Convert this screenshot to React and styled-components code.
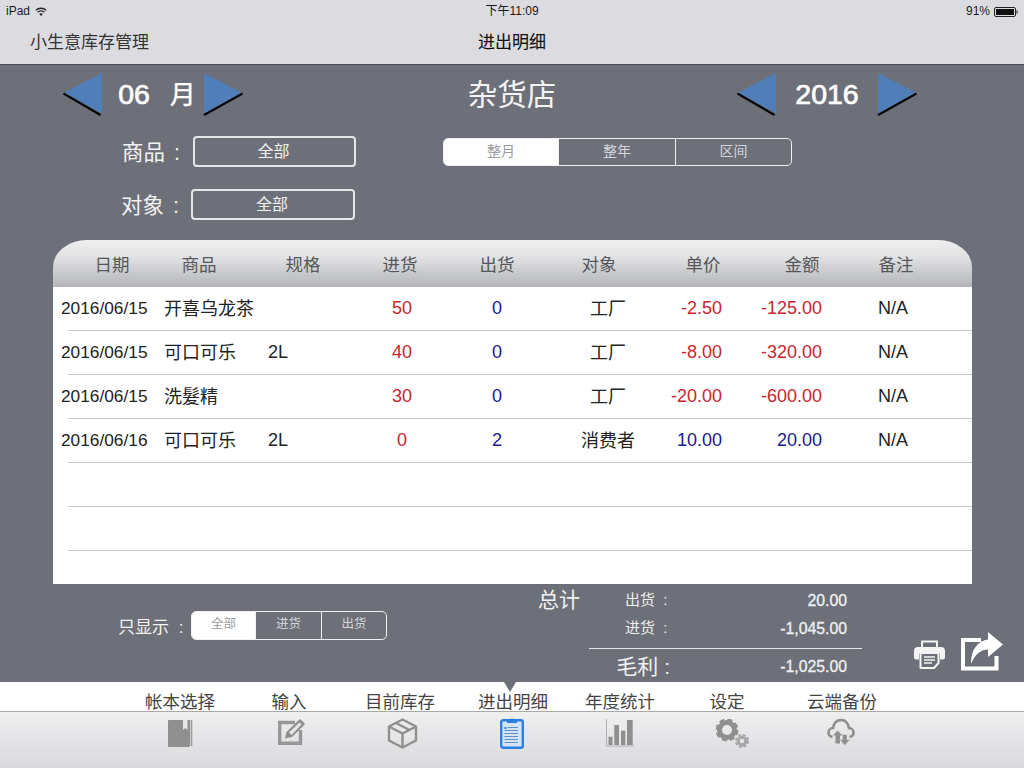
import React from "react";
import styled, { createGlobalStyle } from "styled-components";

const Global = createGlobalStyle`
  html, body { margin: 0; padding: 0; background: #6d7078; }
  * { box-sizing: border-box; }
  body { font-family: "Liberation Sans", "Noto Sans CJK SC", sans-serif; }
`;
const Page = styled.div`
  width: 1024px; height: 768px; overflow: hidden; display: flex; flex-direction: column; background: #6d7078;
`;
const Header = styled.header`
  height: 65px; background: #dcdce0; border-bottom: 1px solid #4b4d52; flex: none; color: #111;
`;
const StatusBar = styled.div`
  height: 23px; padding: 0 6px; display: grid; grid-template-columns: 1fr auto 1fr; align-items: center; font-size: 12px; line-height: 23px; color: #1a1a1a;
`;
const StatusLeft = styled.div`display: flex; align-items: center; gap: 5px;`;
const StatusRight = styled.div`display: flex; align-items: center; justify-content: flex-end; gap: 4px;`;
const NavBar = styled.div`
  height: 41px; padding: 0 0 0 30px; display: grid; grid-template-columns: 448px 68px; align-items: start; font-size: 17px; line-height: 40px;
`;
const AppName = styled.div`color: #333; white-space: nowrap;`;
const NavTitle = styled.div`color: #111; white-space: nowrap; -webkit-text-stroke: .1px #111;`;

const Main = styled.main`flex: none; height: 617px; display: flex; flex-direction: column;`;
const TopRow = styled.div`
  height: 71px; flex: none; padding: 8px 0 0 63px; display: grid; grid-template-columns: 180px 494px 180px; align-items: start; color: #fff;
`;
const Stepper = styled.div`display: flex; align-items: flex-start; justify-content: space-between;`;
const StepValue = styled.div`
  font-size: 28.5px; font-weight: 400; line-height: 42px; white-space: nowrap; -webkit-text-stroke: .7px #fff;
  margin-left: ${p => p.$shift || 0}px;
`;
const MonthUnit = styled.span`margin-left: 20px; font-size: 26px; -webkit-text-stroke: .4px #fff;`;
const StoreTitle = styled.div`font-size: 29.5px; line-height: 44px; text-align: center; padding-left: 44px; color: #f4f4f4;`;

const Filters = styled.div`
  height: 104px; flex: none; display: grid; grid-template-columns: 443px 349px; grid-template-rows: 31px 31px; row-gap: 22px;
`;
const FilterLine = styled.div`
  display: flex; align-items: center; padding-left: ${p => p.$left}px; color: #f2f2f2; font-size: 21.5px; white-space: nowrap;
`;
const FilterLabel = styled.span`width: ${p => p.$width}px; word-spacing: 3px; padding-bottom: 2px;`;
const Field = styled.div`
  width: ${p => p.$width}px; height: 31px; border: 2px solid #e6e6e8; border-radius: 4px; text-align: center; font-size: 16px; line-height: 28px; color: #f2f2f2; padding-right: 2px;
`;
const Segmented = styled.div`
  display: grid; grid-template-columns: ${p => p.$cols}; height: ${p => p.$height}px; border: 1px solid #f0f0f0; border-radius: 5px; overflow: hidden; align-self: center;
  width: ${p => p.$width}px;
`;
const Segment = styled.div`
  text-align: center; font-size: ${p => p.$size}px; line-height: ${p => p.$height - 3}px; color: ${p => (p.$on ? "#9a9a9a" : "#d4d5d8")};
  background: ${p => (p.$on ? "#fff" : "transparent")};
  border-left: ${p => (p.$first ? "0" : "1px solid #f0f0f0")};
`;

const Table = styled.section`
  margin-left: 53px; width: 919px; height: 344px; flex: none; display: flex; flex-direction: column;
`;
const TableHead = styled.div`
  height: 47px; flex: none; border-radius: 34px 34px 0 0 / 27px 27px 0 0; padding-left: 15px; display: grid; background: linear-gradient(#efeff0 0%, #e2e2e4 35%, #b3b5b8 100%);
  grid-template-columns: 88px 86px 122px 72px 122px 82px 126px 72px 116px; align-items: center; text-align: center; font-size: 17.5px; color: #55575b;
`;
const TableBody = styled.div`flex: 1; background: #fff;`;
const TableRow = styled.div`
  height: 44px; padding-left: 8px; display: grid; grid-template-columns: 103px 104px 89px 90px 100px 122px 53px 100px 1fr; align-items: center; font-size: 18px; color: #222;
  padding-bottom: 2px;
  background: linear-gradient(#c9c9cb, #c9c9cb) no-repeat 15px 100% / calc(100% - 15px) 1px;
`;
const Cell = styled.div`
  text-align: ${p => p.$align || "left"}; color: ${p => p.$color || "inherit"}; font-size: ${p => p.$size || 18}px; white-space: nowrap;
  padding-left: ${p => p.$pad || 0}px; padding-bottom: ${p => p.$lift || 0}px;
`;

const Footer = styled.div`
  height: 98px; flex: none; display: grid; grid-template-columns: 420px 324px 1fr; padding-left: 118px;
`;
const ShowFilter = styled.div`
  display: flex; align-items: center; height: 29px; margin-top: 27px; color: #f2f2f2; font-size: 17px; white-space: nowrap;
`;
const ShowLabel = styled.span`width: 73px; word-spacing: 5px;`;
const Summary = styled.div`
  display: grid; grid-template-columns: 87px 45px 177px 15px; grid-template-rows: 28px 28px 6px 1px 33px; padding-top: 2px; color: #f0f0f2; align-items: center;
`;
const TotalTitle = styled.div`font-size: 21px; color: #f2f2f2; margin-top: -4px;`;
const SumLabel = styled.div`font-size: 15px; white-space: nowrap; color: #eee; word-spacing: 4px; padding-bottom: 4px;`;
const SumValue = styled.div`font-size: 15.8px; text-align: right; padding-top: 2px; -webkit-text-stroke: .3px #f0f0f2;`;
const SumRule = styled.div`grid-column: 1 / -1; grid-row: 4; height: 1px; margin-left: 51px; background: #e6e6e8;`;
const ProfitLabel = styled.div`grid-column: 1 / 3; grid-row: 5; text-align: right; font-size: 21px; white-space: nowrap; color: #f2f2f2; padding-bottom: 2px;`;
const ProfitValue = styled(SumValue)`grid-column: 3; grid-row: 5;`;
const Actions = styled.div`display: flex; align-items: flex-start; padding: 48px 0 0 52px; gap: 16px;`;
const PrinterSlot = styled.div`margin-top: 8px;`;

const LabelBand = styled.div`
  height: 29px; flex: none; background: #fff; padding: 12px 0 0 125px; position: relative;
  display: grid; grid-template-columns: 110px 108px 114px 112px 102px 112px 118px; text-align: center; font-size: 17.5px; line-height: 17px; color: #444;
  white-space: nowrap;
`;
const Pointer = styled.div`
  position: absolute; top: 0; left: 504px; width: 0; height: 0;
  border-left: 6px solid transparent; border-right: 6px solid transparent; border-top: 10px solid #6d7078;
`;
const TabBar = styled.nav`
  flex: 1; border-top: 1px solid #a9a9ab; background: linear-gradient(#efeff0, #d9d9dd); padding: 4px 0 0 126px;
  display: grid; grid-template-columns: 110px 110px 112px 108px 108px 114px 106px; justify-items: center; align-items: start;
`;
const TabIcon = styled.div`
  display: flex; margin-top: ${p => p.$top}px; margin-left: ${p => p.$left || 0}px;
`;

const Arrow = ({ dir }) => (
  <svg width="40" height="43" viewBox="0 0 40 43">
    {dir === "left" ? (
      <>
        <path d="M.5 20.500 L37.500 42" stroke="#050608" strokeWidth="2.400" fill="none" />
        <path d="M1.500 19.500 L39 0 L39 40.500 Z" fill="#4f7eb8" />
      </>
    ) : (
      <>
        <path d="M39.500 20.500 L1 42" stroke="#050608" strokeWidth="2.400" fill="none" />
        <path d="M1 0 L38.500 19.500 L1 40.500 Z" fill="#4f7eb8" />
      </>
    )}
  </svg>
);

const Wifi = () => (
  <svg width="12" height="10" viewBox="0 0 12 10" fill="none" stroke="#222" strokeWidth="1.3">
    <path d="M.8 3.4a7.4 7.4 0 0 1 10.4 0M2.6 5.3a4.8 4.8 0 0 1 6.8 0" />
    <path d="M4.2 7.1a2.5 2.5 0 0 1 3.6 0L6 9z" fill="#222" stroke="none" />
  </svg>
);
const Battery = () => (
  <svg width="24" height="10" viewBox="0 0 24 10">
    <rect x=".5" y=".5" width="21" height="9" rx="1.5" fill="none" stroke="#222" />
    <rect x="2" y="2" width="18" height="6" fill="#111" />
    <path d="M22.500 3.200h1v3.600h-1z" fill="#222" />
  </svg>
);
const Printer = () => (
  <svg width="31" height="29" viewBox="0 0 31 29">
    <path d="M8 8V1.500h15V8" fill="none" stroke="#f4f4f4" strokeWidth="2" />
    <path d="M4 7h23a4 4 0 0 1 4 4v6.500a2 2 0 0 1-2 2h-3v-6H5v6H2a2 2 0 0 1-2-2V11a4 4 0 0 1 4-4z" fill="#f4f4f4" />
    <path d="M6.500 13h18V23l-4.500 5H6.500z" fill="#6d7078" stroke="#f4f4f4" strokeWidth="2" strokeLinejoin="round" />
    <path d="M10 17h11M10 20h11M10 23h8" stroke="#f4f4f4" strokeWidth="1.300" />
  </svg>
);
const Share = () => (
  <svg width="42" height="39" viewBox="0 0 42 39">
    <path d="M2 8h18M2 6v32M0 36.500h37.500M35.500 38V24" fill="none" stroke="#fff" strokeWidth="4" />
    <path d="M27 0 L42 12.500 L27 25 V17.500 C20 17.500 14 22 10 32 C9.500 18 17 8.500 27 7.500 Z" fill="#fff" />
  </svg>
);

const G = "#8f8f90";
const BookIcon = () => (
  <svg width="26" height="28" viewBox="0 0 26 28">
    <rect x="0" y="1" width="22" height="27" rx="1" fill={G} />
    <path d="M23.500 1v26" stroke="#9a9a9c" strokeWidth="1.600" />
    <path d="M15 1h4.500v10l-2.200-2-2.300 2z" fill="#e6e6e8" />
  </svg>
);
const EditIcon = () => (
  <svg width="27" height="26" viewBox="0 0 27 26" fill="none">
    <path d="M17 3.500H1.700v20.800h20.800V11" stroke="#979799" strokeWidth="3.400" />
    <path d="M7 19.500l1.500-6.500L20.500 1.200a2 2 0 0 1 3 0l2.300 2.300a2 2 0 0 1 0 3L14 18z" fill={G} />
    <path d="M11 13.500L21.500 3.500l2 2-10 10.500z" fill="#e6e6e8" />
  </svg>
);
const BoxIcon = () => (
  <svg width="31" height="31" viewBox="0 0 31 31" fill="none" stroke={G} strokeWidth="2.400" strokeLinejoin="round">
    <path d="M15.500 1.500L29 8.500v14L15.500 29.500 2 22.500v-14z" />
    <path d="M2 8.500l13.500 7 13.500-7M15.500 15.500v14M9 5l13.500 7" />
  </svg>
);
const ClipIcon = () => (
  <svg width="24" height="33" viewBox="0 0 24 33">
    <rect x="1.200" y="4.200" width="21.600" height="27.600" rx="2" fill="#d3e4f7" stroke="#2a7fe0" strokeWidth="2.400" />
    <path d="M7 6V3.500h3.500a1.600 1.600 0 0 1 3 0H17V7H7z" fill="#2a7fe0" />
    <path d="M7.500 11.500h10.500M4.500 14.500h13.500M4.500 17.500h13.500M4.500 20.500h13.500M4.500 23.500h13.500M4.500 26.500h13.500" stroke="#5f8ec6" strokeWidth="1.100" />
    <rect x="4.500" y="11" width="2" height="2" fill="#2a7fe0" />
  </svg>
);
const ChartIcon = () => (
  <svg width="28" height="28" viewBox="0 0 28 28" fill={G}>
    <path d="M.5 0v27H28" fill="none" stroke="#b0b0b2" strokeWidth="1" />
    <rect x="2.500" y="17.700" width="4" height="8.300" />
    <rect x="8.300" y="6" width="4.700" height="20" />
    <rect x="15" y="11.700" width="4.300" height="14.300" />
    <rect x="21" y="1" width="5.700" height="25" />
  </svg>
);
const GearIcon = () => (
  <svg width="34" height="29" viewBox="0 0 34 29" fill="none">
    <circle cx="11" cy="11" r="7.500" stroke={G} strokeWidth="5" />
    <circle cx="11" cy="11" r="10" stroke={G} strokeWidth="3" strokeDasharray="5 2.850" />
    <circle cx="26" cy="22" r="3.800" stroke="#a6a6a8" strokeWidth="3" />
    <circle cx="26" cy="22" r="6" stroke="#a6a6a8" strokeWidth="2" strokeDasharray="3 1.710" />
  </svg>
);
const CloudIcon = () => (
  <svg width="28" height="29" viewBox="0 0 28 29">
    <path d="M5.500 19C2.800 18.500 1.500 16.500 1.500 14.500 1.500 12 3.500 10 6 10 7 5 10 2 14 2c4 0 7 3 8 8 2.500 0 4.500 2 4.500 4.500 0 2-1.300 4-4 4.500" fill="none" stroke={G} strokeWidth="2.600" />
    <path d="M10.500 12.500L6 17.500h2.500v8h4.500v-8h2.500z" fill={G} />
    <path d="M15.500 16.500h4.500v5h3L17.800 27.500 12.500 21.500h3z" fill={G} stroke="#e4e4e6" strokeWidth=".5" />
  </svg>
);

const RED = "#c9252f";
const BLUE = "#1a1a8e";
const rows = [
  ["2016/06/15", "开喜乌龙茶", "", "50", "0", "工厂", "-2.50", "-125.00"],
  ["2016/06/15", "可口可乐", "2L", "40", "0", "工厂", "-8.00", "-320.00"],
  ["2016/06/15", "洗髮精", "", "30", "0", "工厂", "-20.00", "-600.00"],
  ["2016/06/16", "可口可乐", "2L", "0", "2", "消费者", "10.00", "20.00"],
];
const heads = ["日期", "商品", "规格", "进货", "出货", "对象", "单价", "金额", "备注"];
const tabs = ["帐本选择", "输入", "目前库存", "进出明细", "年度统计", "设定", "云端备份"];

export default function App() {
  return (
    <Page>
      <Global />
      <Header>
        <StatusBar>
          <StatusLeft>iPad <Wifi /></StatusLeft>
          <div>下午11:09</div>
          <StatusRight>91% <Battery /></StatusRight>
        </StatusBar>
        <NavBar>
          <AppName>小生意库存管理</AppName>
          <NavTitle>进出明细</NavTitle>
        </NavBar>
      </Header>
      <Main>
        <TopRow>
          <Stepper>
            <Arrow dir="left" />
            <StepValue $shift={8}>06<MonthUnit>月</MonthUnit></StepValue>
            <Arrow dir="right" />
          </Stepper>
          <StoreTitle>杂货店</StoreTitle>
          <Stepper>
            <Arrow dir="left" />
            <StepValue>2016</StepValue>
            <Arrow dir="right" />
          </Stepper>
        </TopRow>
        <Filters>
          <FilterLine $left={122}>
            <FilterLabel $width={71}>商品 :</FilterLabel>
            <Field $width={163}>全部</Field>
          </FilterLine>
          <Segmented $cols="114px 117px 1fr" $height={28} $width={349}>
            <Segment $on $first $size={14} $height={28}>整月</Segment>
            <Segment $size={14} $height={28}>整年</Segment>
            <Segment $size={14} $height={28}>区间</Segment>
          </Segmented>
          <FilterLine $left={121}>
            <FilterLabel $width={70}>对象 :</FilterLabel>
            <Field $width={164}>全部</Field>
          </FilterLine>
        </Filters>
        <Table>
          <TableHead>{heads.map(h => <div key={h}>{h}</div>)}</TableHead>
          <TableBody>
            {rows.map((r, i) => {
              const money = r[6].startsWith("-") ? RED : BLUE;
              return (
                <TableRow key={i}>
                  <Cell $size={17.3}>{r[0]}</Cell>
                  <Cell $lift={3}>{r[1]}</Cell>
                  <Cell>{r[2]}</Cell>
                  <Cell $align="center" $color={RED}>{r[3]}</Cell>
                  <Cell $align="center" $color={BLUE}>{r[4]}</Cell>
                  <Cell $align="center" $lift={2}>{r[5]}</Cell>
                  <Cell $align="right" $color={money}>{r[6]}</Cell>
                  <Cell $align="right" $color={money}>{r[7]}</Cell>
                  <Cell $pad={56}>N/A</Cell>
                </TableRow>
              );
            })}
            <TableRow /><TableRow />
          </TableBody>
        </Table>
        <Footer>
          <ShowFilter>
            <ShowLabel>只显示 :</ShowLabel>
            <Segmented $cols="63px 66px 1fr" $height={29} $width={196}>
              <Segment $on $first $size={12.5} $height={28}>全部</Segment>
              <Segment $size={12.5} $height={28}>进货</Segment>
              <Segment $size={12.5} $height={28}>出货</Segment>
            </Segmented>
          </ShowFilter>
          <Summary>
            <TotalTitle>总计</TotalTitle>
            <SumLabel>出货 :</SumLabel>
            <SumValue>20.00</SumValue>
            <div />
            <div />
            <SumLabel>进货 :</SumLabel>
            <SumValue>-1,045.00</SumValue>
            <SumRule />
            <ProfitLabel>毛利 :</ProfitLabel>
            <ProfitValue>-1,025.00</ProfitValue>
          </Summary>
          <Actions>
            <PrinterSlot><Printer /></PrinterSlot>
            <Share />
          </Actions>
        </Footer>
      </Main>
      <LabelBand>
        {tabs.map(t => <div key={t}>{t}</div>)}
        <Pointer />
      </LabelBand>
      <TabBar>
        <TabIcon $top={3}><BookIcon /></TabIcon>
        <TabIcon $top={3}><EditIcon /></TabIcon>
        <TabIcon $top={2}><BoxIcon /></TabIcon>
        <TabIcon $top={0}><ClipIcon /></TabIcon>
        <TabIcon $top={3}><ChartIcon /></TabIcon>
        <TabIcon $top={3} $left={3}><GearIcon /></TabIcon>
        <TabIcon $top={2}><CloudIcon /></TabIcon>
      </TabBar>
    </Page>
  );
}
